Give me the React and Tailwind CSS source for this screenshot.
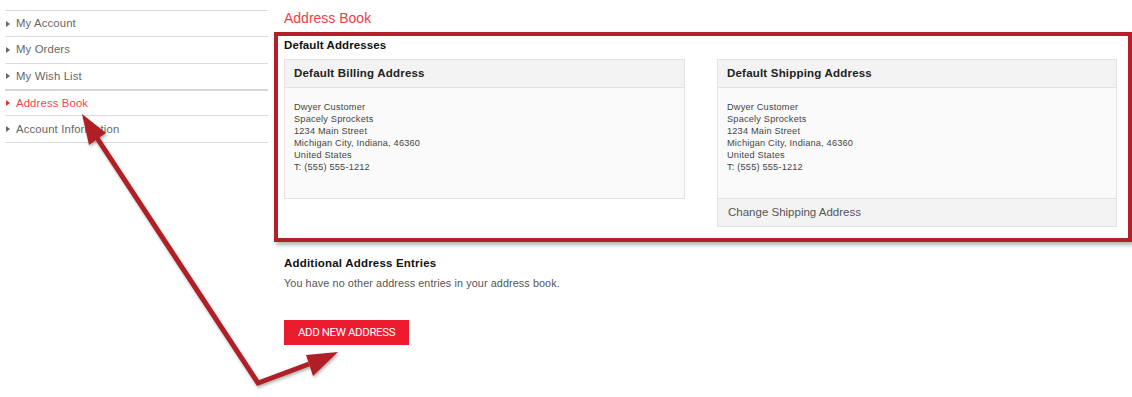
import React from 'react';

const navItems = [
    { name: 'My Account' },
    { name: 'My Orders' },
    { name: 'My Wish List' },
    { name: 'Address Book', active: true },
    { name: 'Account Information' },
];

const addressLines = [
    'Dwyer Customer',
    'Spacely Sprockets',
    '1234 Main Street',
    'Michigan City, Indiana, 46360',
    'United States',
    'T: (555) 555-1212',
];

function AddressCard({ title, footer }) {
    return (
        <div className="border border-[#e2e2e2] bg-[#fafafa]">
            <div className="h-[28px] flex items-center px-[9px] bg-[#f3f3f3] border-b border-[#e2e2e2]">
                <h3 className="text-[11.5px] font-bold text-[#222] tracking-[0.2px]">{title}</h3>
            </div>
            <div className="px-[9px] pt-[13px] pb-[25px] text-[9.2px] leading-[12px] text-[#444] tracking-[0.2px]">
                {addressLines.map((line) => (
                    <div key={line}>{line}</div>
                ))}
            </div>
            {footer && (
                <div className="h-[28px] flex items-center px-[10px] bg-[#f3f3f3] border-t border-[#e2e2e2] text-[11.5px] text-[#555]">
                    {footer}
                </div>
            )}
        </div>
    );
}

export default function App() {
    return (
        <div className="relative w-[1132px] h-[397px] bg-white overflow-hidden font-['Liberation_Sans',Arial,sans-serif]">
            <div className="flex">
                {/* Sidebar */}
                <div className="w-[268px] pl-[5px] pt-[10px] shrink-0">
                    <ul className="border-b border-[#dcdcdc]">
                        {navItems.map((item, i) => (
                            <li
                                key={item.name}
                                className={`flex items-center ${i === 3 ? 'h-[26.5px] border-t-2 border-[#d6d6d6]' : 'h-[26.3px] border-t border-[#dcdcdc]'}`}
                            >
                                <span
                                    className={`ml-[1px] w-0 h-0 border-y-[3px] border-y-transparent border-l-[4px] ${item.active ? 'border-l-[#ee2b35]' : 'border-l-[#666]'}`}
                                />
                                <span
                                    className={`ml-[6px] text-[11.3px] tracking-[0.15px] ${item.active ? 'text-[#f0464c]' : 'text-[#666]'}`}
                                >
                                    {item.name}
                                </span>
                            </li>
                        ))}
                    </ul>
                </div>

                {/* Main */}
                <div className="ml-[16px] w-[833px] pt-[8px]">
                    <h1 className="text-[14px] leading-[20px] text-[#ee3c44]">Address Book</h1>

                    <h2 className="mt-[9px] text-[11.5px] leading-[16px] font-bold text-[#111] tracking-[0.1px]">
                        Default Addresses
                    </h2>
                    <div className="mt-[6px] grid grid-cols-[401px_400px] gap-[32px] items-start">
                        <AddressCard title="Default Billing Address" />
                        <AddressCard title="Default Shipping Address" footer="Change Shipping Address" />
                    </div>

                    <h2 className="mt-[28px] text-[11.5px] leading-[16px] font-bold text-[#111] tracking-[0.2px]">
                        Additional Address Entries
                    </h2>
                    <p className="mt-[4px] text-[10.8px] leading-[16px] text-[#555] tracking-[0.1px]">
                        You have no other address entries in your address book.
                    </p>

                    <button className="mt-[29px] w-[125px] h-[25px] bg-[#ec1b2e] text-white text-[11.5px] font-['Roboto',sans-serif] tracking-[-0.4px]">
                        ADD NEW ADDRESS
                    </button>
                </div>
            </div>

            {/* Annotation: highlight box */}
            <div className="absolute left-[274px] top-[32px] w-[858px] h-[210px] border-4 border-[#b3202a] shadow-[2px_3px_4px_rgba(0,0,0,0.3)] pointer-events-none" />

            {/* Annotation: arrows */}
            <svg className="absolute inset-0 pointer-events-none" width="1132" height="397" viewBox="0 0 1132 397">
                <g style={{ filter: 'drop-shadow(1px 2px 1.5px rgba(0,0,0,0.3))' }}>
                    <polyline
                        points="97,138 258,383 309,364"
                        fill="none"
                        stroke="#b01f26"
                        strokeWidth="5"
                        strokeLinejoin="miter"
                    />
                    <polygon points="82,114 106,133 89,145" fill="#b01f26" />
                    <polygon points="338,352 306,355 313,376" fill="#b01f26" />
                </g>
            </svg>
        </div>
    );
}
